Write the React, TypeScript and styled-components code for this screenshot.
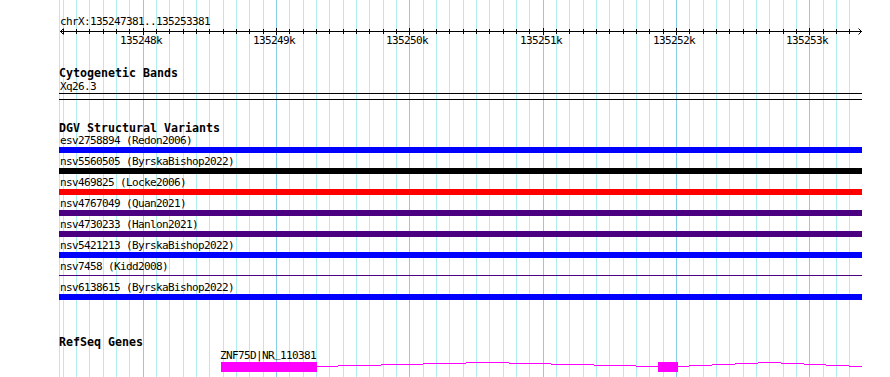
import styled, { createGlobalStyle } from 'styled-components';

const GlobalStyle = createGlobalStyle`
  html, body {
    margin: 0;
    padding: 0;
    background: #ffffff;
  }
`;

// region shown in the browser panel
const START = 135247381;
const END = 135253381;
const PANEL_LEFT = 59;
const PANEL_WIDTH = 803;

const toCol = (bp: number) => Math.floor(60.7 + ((bp - START) * 800) / (END - START));

const minorCols: number[] = [];
for (let bp = 135247400; bp <= 135253300; bp += 100) {
  if (bp % 1000 !== 0) minorCols.push(toCol(bp));
}
const majors = [135248000, 135249000, 135250000, 135251000, 135252000, 135253000].map((bp) => ({
  col: toCol(bp),
  label: `${bp / 1000}k`,
}));

const variants = [
  { name: 'esv2758894 (Redon2006)', color: '#0000ff' },
  { name: 'nsv5560505 (ByrskaBishop2022)', color: '#000000' },
  { name: 'nsv469825 (Locke2006)', color: '#ff0000' },
  { name: 'nsv4767049 (Quan2021)', color: '#4b0082' },
  { name: 'nsv4730233 (Hanlon2021)', color: '#4b0082' },
  { name: 'nsv5421213 (ByrskaBishop2022)', color: '#0000ff' },
  { name: 'nsv7458 (Kidd2008)', color: '#4b0082', thin: true },
  { name: 'nsv6138615 (ByrskaBishop2022)', color: '#0000ff' },
];

// ZNF75D|NR_110381, in pixel columns of the panel
const gene = {
  symbol: 'ZNF75D|NR',
  accession: '110381',
  exons: [
    [221, 317],
    [658, 678],
  ],
  // intron drawn as a shallow hat: [from, to, row]
  introns: [
    [317, 338, 366], [338, 381, 365], [381, 423, 364], [423, 466, 363], [466, 509, 362],
    [509, 551, 363], [551, 594, 364], [594, 636, 365], [636, 658, 366],
    [678, 689, 366], [689, 712, 365], [712, 735, 364], [735, 758, 363], [758, 781, 362],
    [781, 804, 363], [804, 826, 364], [826, 849, 365], [849, 862, 366],
  ],
};
const GENE_TOP = 362;

const Page = styled.div`
  position: relative;
  width: 890px;
  height: 377px;
  overflow: hidden;
  background: #ffffff;
  color: #000000;
  font-family: "DejaVu Sans Mono", "Liberation Mono", monospace;
`;

const GridLayer = styled.svg`
  position: absolute;
  inset: 0;
  z-index: 0;
`;

const Panel = styled.div`
  position: relative;
  z-index: 1;
  display: flex;
  flex-direction: column;
  width: ${PANEL_WIDTH}px;
  margin-left: ${PANEL_LEFT}px;
`;

const RegionLabel = styled.div`
  margin-top: 17px;
  padding-left: 1px;
  font-size: 11px;
  letter-spacing: -0.62px;
  line-height: 10px;
  height: 10px;
  white-space: nowrap;
`;

const Ruler = styled.svg`
  display: block;
  width: ${PANEL_WIDTH}px;
  height: 21px;
  font-family: "DejaVu Sans Mono", "Liberation Mono", monospace;
  font-size: 11px;
  letter-spacing: -0.62px;
`;

const Track = styled.section<{ $gap: number }>`
  display: flex;
  flex-direction: column;
  margin-top: ${(p) => p.$gap}px;
`;

const TrackTitle = styled.div`
  font-weight: bold;
  font-size: 11.63px;
  line-height: 13px;
  height: 13px;
  white-space: nowrap;
`;

const FeatureLabel = styled.div<{ $tight?: boolean }>`
  padding-left: 1px;
  font-size: 11px;
  letter-spacing: -0.62px;
  line-height: ${(p) => (p.$tight ? 12 : 13)}px;
  height: ${(p) => (p.$tight ? 12 : 13)}px;
  white-space: nowrap;
`;

// the bitmap font sits its underscore on the baseline
const Underscore = styled.span`
  position: relative;
  top: -2px;
`;

const BandLines = styled.div`
  box-sizing: border-box;
  height: 7px;
  border-top: 1px solid #000000;
  border-bottom: 1px solid #000000;
`;

const VariantRow = styled.div`
  display: flex;
  flex-direction: column;
  padding-bottom: 3px;
`;

const VariantBar = styled.div<{ $color: string; $thin?: boolean }>`
  height: ${(p) => (p.$thin ? 1 : 6)}px;
  margin: ${(p) => (p.$thin ? '2px 0 3px' : '0')};
  background: ${(p) => p.$color};
`;

const GeneGlyph = styled.svg`
  display: block;
  width: ${PANEL_WIDTH}px;
  height: 10px;
`;

function Grid() {
  return (
    <GridLayer width={890} height={377} shapeRendering="crispEdges">
      <rect x={59} y={0} width={1} height={377} fill="#afeeee" />
      {minorCols.map((c) => (
        <rect key={c} x={c} y={0} width={1} height={377} fill="#afeeee" />
      ))}
      {majors.map(({ col }) => (
        <rect key={col} x={col} y={0} width={1} height={377} fill="#87ceeb" />
      ))}
    </GridLayer>
  );
}

function Scale() {
  const right = PANEL_WIDTH - 1;
  return (
    <Ruler viewBox={`0 0 ${PANEL_WIDTH} 21`}>
      <rect x={1} y={4} width={right} height={1} fill="#000" shapeRendering="crispEdges" />
      {minorCols.map((c) => (
        <rect key={c} x={c - PANEL_LEFT} y={2} width={1} height={5} fill="#000" shapeRendering="crispEdges" />
      ))}
      {majors.map(({ col, label }) => (
        <g key={col}>
          <rect x={col - PANEL_LEFT} y={1} width={1} height={7} fill="#000" shapeRendering="crispEdges" />
          <text x={col - PANEL_LEFT - 23} y={17} fill="#000">
            {label}
          </text>
        </g>
      ))}
      <path d="M4.5 1.5 L1.5 4.5 L4.5 7.5" stroke="#000" strokeWidth={1} fill="none" />
      <path
        d={`M${right - 2.5} 1.5 L${right + 0.5} 4.5 L${right - 2.5} 7.5`}
        stroke="#000"
        strokeWidth={1}
        fill="none"
      />
    </Ruler>
  );
}

function Gene() {
  return (
    <GeneGlyph viewBox={`0 0 ${PANEL_WIDTH} 10`} shapeRendering="crispEdges">
      {gene.introns.map(([a, b, row]) => (
        <rect key={a} x={a - PANEL_LEFT} y={row - GENE_TOP} width={b - a} height={1} fill="#ff00ff" />
      ))}
      {gene.exons.map(([a, b]) => (
        <rect key={a} x={a - PANEL_LEFT} y={0} width={b - a} height={10} fill="#ff00ff" />
      ))}
    </GeneGlyph>
  );
}

export default function App() {
  return (
    <>
      <GlobalStyle />
      <Page>
        <Grid />
        <Panel>
          <RegionLabel>chrX:135247381..135253381</RegionLabel>
          <Scale />

          <Track $gap={19}>
            <TrackTitle>Cytogenetic Bands</TrackTitle>
            <FeatureLabel>Xq26.3</FeatureLabel>
            <BandLines />
          </Track>

          <Track $gap={22}>
            <TrackTitle>DGV Structural Variants</TrackTitle>
            {variants.map((v) => (
              <VariantRow key={v.name}>
                <FeatureLabel $tight>{v.name}</FeatureLabel>
                <VariantBar $color={v.color} $thin={v.thin} />
              </VariantRow>
            ))}
          </Track>

          <Track $gap={33}>
            <TrackTitle>RefSeq Genes</TrackTitle>
            <FeatureLabel style={{ paddingLeft: gene.exons[0][0] - PANEL_LEFT - 1 }}>
              {gene.symbol}
              <Underscore>_</Underscore>
              {gene.accession}
            </FeatureLabel>
            <Gene />
          </Track>
        </Panel>
      </Page>
    </>
  );
}
